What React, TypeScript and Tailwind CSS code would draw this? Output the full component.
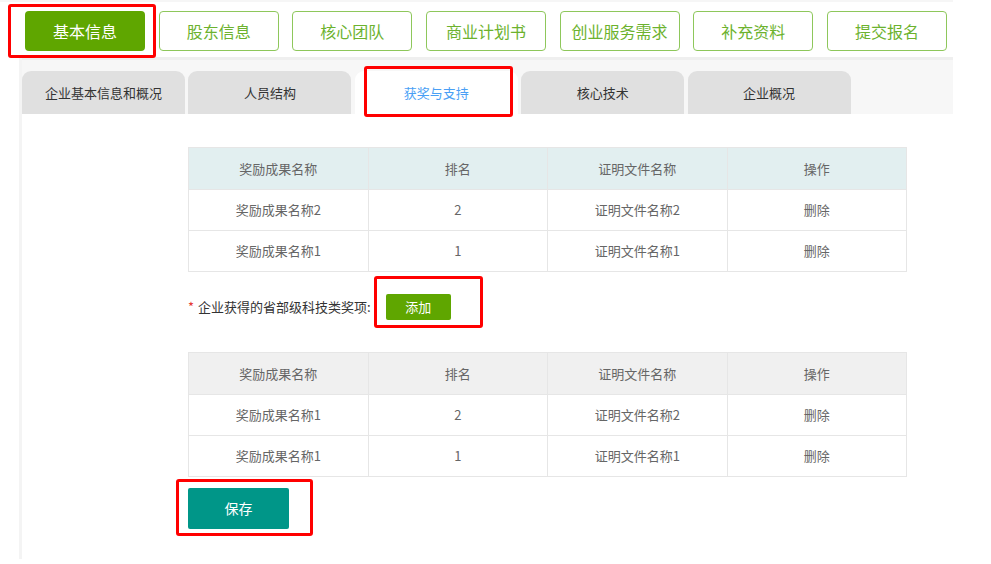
import React from "react";

const navs = ["基本信息", "股东信息", "核心团队", "商业计划书", "创业服务需求", "补充资料", "提交报名"];
const tabs = ["企业基本信息和概况", "人员结构", "获奖与支持", "核心技术", "企业概况"];

function Table({ header, rows }: { header: string; rows: string[][] }) {
  const heads = ["奖励成果名称", "排名", "证明文件名称", "操作"];
  return (
    <table className="w-[719px] border-collapse table-fixed text-[13px] text-[#666]">
      <thead>
        <tr className={`h-[42px] ${header}`}>
          {heads.map((h) => (
            <th key={h} className="font-normal border border-[#e6e6e6]">{h}</th>
          ))}
        </tr>
      </thead>
      <tbody>
        {rows.map((r, i) => (
          <tr key={i} className="h-[41px]">
            {r.map((c, j) => (
              <td key={j} className="text-center border border-[#e6e6e6]">{c}</td>
            ))}
          </tr>
        ))}
      </tbody>
    </table>
  );
}

export default function App() {
  return (
    <div
      className="relative w-[991px] h-[564px] bg-white overflow-hidden"
      style={{ fontFamily: '"Noto Sans CJK SC", "Noto Sans", sans-serif' }}
    >
      <div className="h-[2px] w-[953px] bg-[#f6f6f6]" />
      <div className="flex gap-[13.67px] pl-[25px] pt-[9px]">
        {navs.map((n, i) => (
          <div
            key={n}
            className={`w-[120px] h-[40px] rounded-[4px] flex items-center justify-center text-[16px] ${
              i === 0
                ? "bg-[#5fa600] text-white"
                : "border border-[#8ec75b] text-[#6cb22e] bg-white"
            }`}
          >
            {n}
          </div>
        ))}
      </div>
      <div className="ml-[19px] mt-[6px] w-[934px] h-[502px] border-l-[3px] border-[#f4f4f4] flex flex-col">
        <div className="h-[57px] bg-[#f7f7f7] pt-[11px] flex gap-[3.4px] border-t-[3px] border-[#efefef]">
          {tabs.map((t, i) => (
            <div
              key={t}
              className={`w-[163px] h-[43px] rounded-t-[9px] flex items-center justify-center text-[13px] ${
                i === 2 ? "bg-white text-[#4a9ff5]" : "bg-[#e0e0e0] text-[#333]"
              }`}
            >
              {t}
            </div>
          ))}
        </div>
        <div className="pl-[166px] pt-[33px] flex flex-col">
          <Table
            header="bg-[#e2eff0]"
            rows={[
              ["奖励成果名称2", "2", "证明文件名称2", "删除"],
              ["奖励成果名称1", "1", "证明文件名称1", "删除"],
            ]}
          />
          <div className="flex items-center h-[26px] mt-[22px]">
            <span className="text-[#e53935] text-[13px] mr-[4px]">*</span>
            <span className="text-[13px] text-[#333]">企业获得的省部级科技类奖项:</span>
            <div className="ml-[15px] w-[65px] h-[26px] bg-[#5fa600] rounded-[2px] text-white text-[13px] flex items-center justify-center">
              添加
            </div>
          </div>
          <div className="mt-[32px]">
            <Table
              header="bg-[#f0f0f0]"
              rows={[
                ["奖励成果名称1", "2", "证明文件名称2", "删除"],
                ["奖励成果名称1", "1", "证明文件名称1", "删除"],
              ]}
            />
          </div>
          <div className="mt-[11px] w-[101px] h-[41px] bg-[#009688] rounded-[2px] text-white text-[14px] flex items-center justify-center">
            保存
          </div>
        </div>
      </div>

      <div className="absolute left-[8px] top-[4px] w-[148px] h-[54px] border-[3px] border-[#f00] rounded-[3px]" />
      <div className="absolute left-[364px] top-[66px] w-[149px] h-[51px] border-[3px] border-[#f00] rounded-[3px]" />
      <div className="absolute left-[374px] top-[276px] w-[109px] h-[52px] border-[3px] border-[#f00] rounded-[3px]" />
      <div className="absolute left-[176px] top-[479px] w-[137px] h-[57px] border-[3px] border-[#f00] rounded-[3px]" />
    </div>
  );
}
